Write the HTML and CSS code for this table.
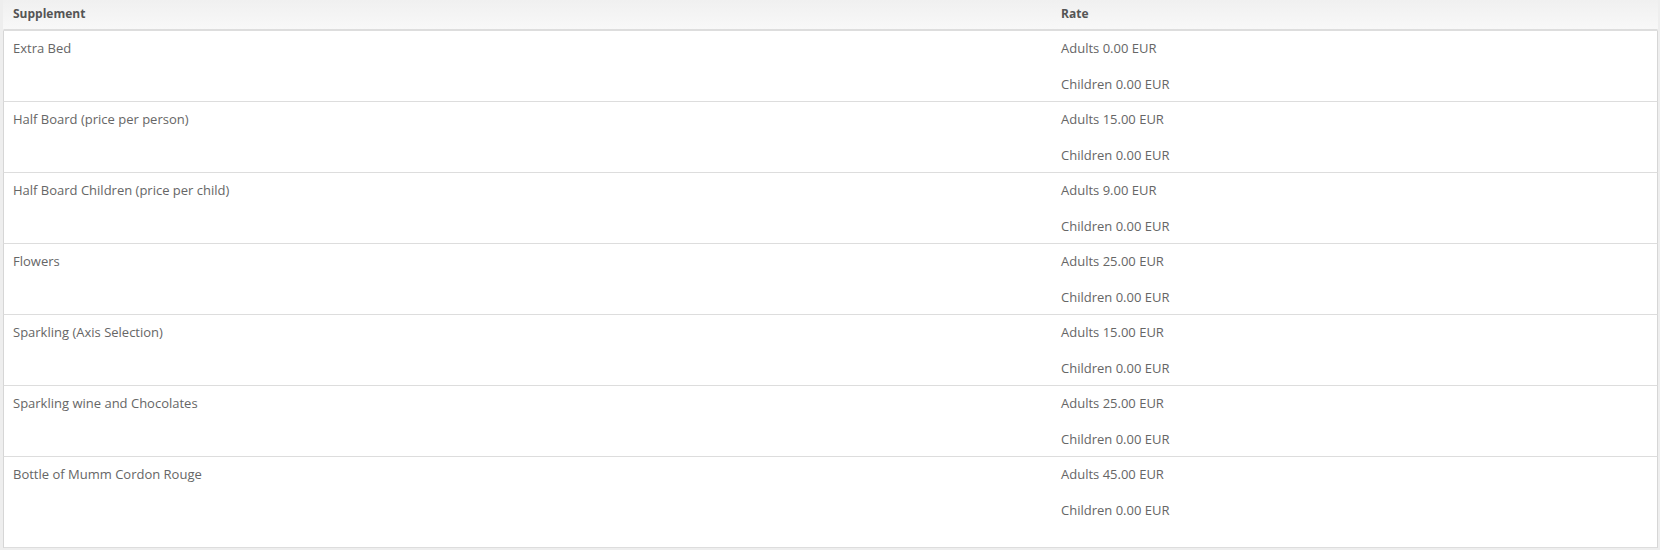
FILE: index.html
```html
<!DOCTYPE html>
<html>
<head>
<meta charset="utf-8">
<link rel="stylesheet" href="styles.css">
</head>
<body>
<div class="wrap">
<table class="supp">
  <thead>
    <tr><th class="c1">Supplement</th><th class="c2">Rate</th></tr>
  </thead>
  <tbody>
    <tr><td>Extra Bed</td><td><p>Adults 0.00 EUR</p><p>Children 0.00 EUR</p></td></tr>
    <tr><td>Half Board (price per person)</td><td><p>Adults 15.00 EUR</p><p>Children 0.00 EUR</p></td></tr>
    <tr><td>Half Board Children (price per child)</td><td><p>Adults 9.00 EUR</p><p>Children 0.00 EUR</p></td></tr>
    <tr><td>Flowers</td><td><p>Adults 25.00 EUR</p><p>Children 0.00 EUR</p></td></tr>
    <tr><td>Sparkling (Axis Selection)</td><td><p>Adults 15.00 EUR</p><p>Children 0.00 EUR</p></td></tr>
    <tr><td>Sparkling wine and Chocolates</td><td><p>Adults 25.00 EUR</p><p>Children 0.00 EUR</p></td></tr>
    <tr class="last"><td>Bottle of Mumm Cordon Rouge</td><td><p>Adults 45.00 EUR</p><p>Children 0.00 EUR</p></td></tr>
  </tbody>
</table>
</div>
</body>
</html>
```

FILE: styles.css
```css
html, body {
  margin: 0;
  padding: 0;
  background: #eeeeee;
}
body {
  font-family: "Open Sans", "Liberation Sans", sans-serif;
  font-size: 13px;
  line-height: 18px;
  color: #666666;
}
.wrap {
  padding: 0 2px 0 3px;
}
.supp {
  width: 100%;
  border-collapse: separate;
  border-spacing: 0;
  table-layout: fixed;
}
.supp th {
  text-align: left;
  font-weight: bold;
  font-size: 12px;
  line-height: 17px;
  color: #555555;
  padding: 5px 8px 7px 8px;
  background: linear-gradient(#f0f0f0, #f8f8f8);
  border-bottom: 2px solid #dddddd;
}
.supp th.c1 {
  width: 1032px;
  padding-left: 9px;
  border-left: 1px solid transparent;
}
.supp th.c2 {
  border-right: 1px solid transparent;
}
.supp td {
  vertical-align: top;
  background: #ffffff;
  padding: 8px 8px;
  border-bottom: 1px solid #dddddd;
}
.supp td:first-child {
  padding-left: 9px;
  border-left: 1px solid #d6d6d6;
}
.supp td:last-child {
  border-right: 1px solid #d6d6d6;
}
.supp td p {
  margin: 0 0 18px 0;
}
.supp td p:last-child {
  margin-bottom: 0;
}
.supp tr.last td {
  padding-bottom: 28px;
}
```
